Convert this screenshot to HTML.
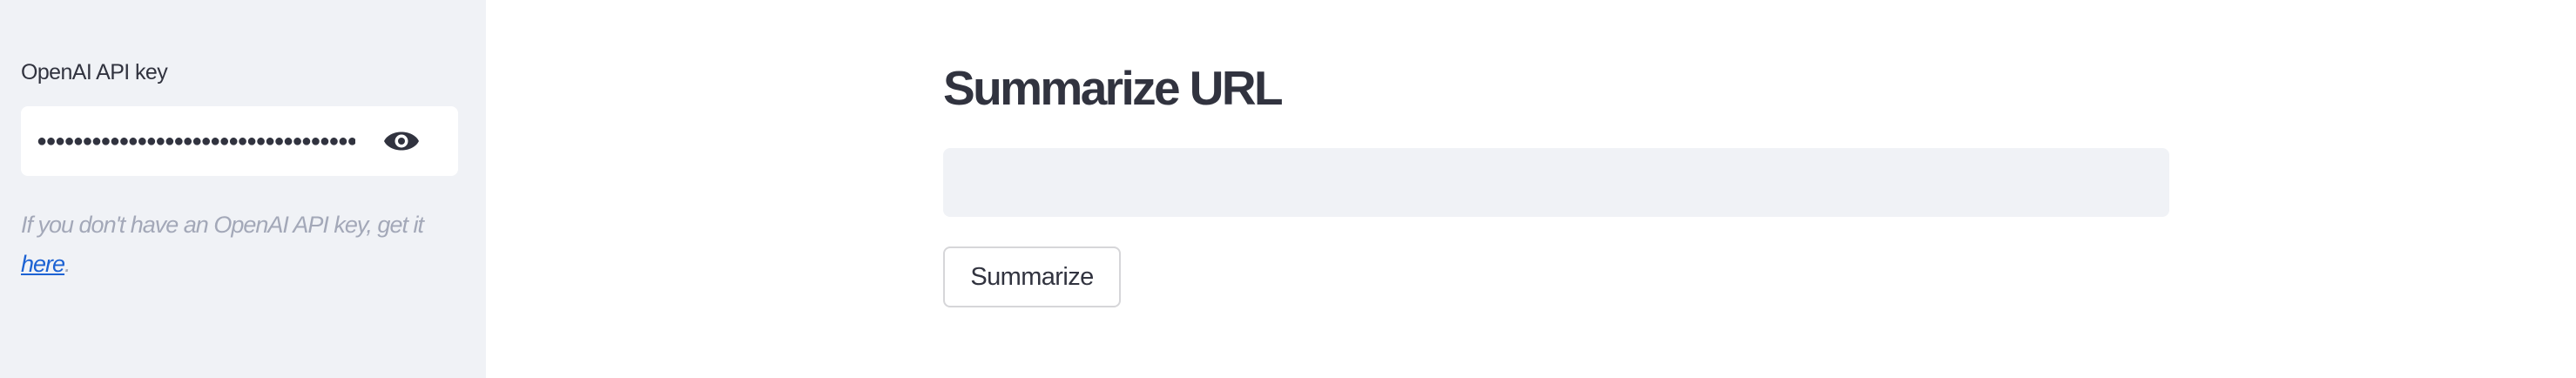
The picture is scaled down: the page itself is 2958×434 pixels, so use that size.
<!DOCTYPE html>
<html><head><meta charset="utf-8"><style>
html,body{margin:0;padding:0;width:2958px;height:434px;overflow:hidden;background:#fff;font-family:"Liberation Sans",sans-serif;color:#31333f}
.side{position:absolute;left:0;top:0;width:558px;height:434px;background:#f0f2f6}
.lbl{position:absolute;left:24px;top:69px;font-size:25px;letter-spacing:-0.6px}
.inp{position:absolute;left:24px;top:122px;width:502px;height:80px;background:#fff;border-radius:8px}
.dots{position:absolute;left:42px;top:150px;width:366px;height:24px;overflow:hidden;white-space:nowrap;font-size:20px;letter-spacing:-1.6px;line-height:24px;color:#31333f}
.help{position:absolute;left:24px;top:236px;font-size:27px;font-style:italic;color:#a3a8b8;letter-spacing:-1px;line-height:45px}
.help a{color:#1c62d3;text-decoration:underline}
h1{position:absolute;left:1083px;top:68px;margin:0;font-size:55px;font-weight:bold;letter-spacing:-2.6px;line-height:66px}
.box{position:absolute;left:1083px;top:170px;width:1408px;height:79px;background:#f0f2f6;border-radius:8px}
.btn{position:absolute;left:1083px;top:283px;width:200px;height:66px;border:2px solid #d6d6d9;border-radius:8px;background:#fff;font-size:29px;letter-spacing:-0.6px;line-height:66px;text-align:center}
</style></head><body>
<div class="side">
<div class="lbl">OpenAI API key</div>
<div class="inp"></div>
<div class="dots">●●●●●●●●●●●●●●●●●●●●●●●●●●●●●●●●●●●●●●●●●●●●●●●●</div>
<svg style="position:absolute;left:440px;top:148px" width="42" height="28" viewBox="0 0 42 28">
<path d="M1 14 C8 0 34 0 41 14 C34 28 8 28 1 14Z" fill="#31333f"/>
<circle cx="21" cy="14" r="7.5" fill="#fff"/><circle cx="21" cy="14" r="4" fill="#31333f"/></svg>
<div class="help">If you don't have an OpenAI API key, get it<br><a>here</a>.</div>
</div>
<h1>Summarize URL</h1>
<div class="box"></div>
<div class="btn">Summarize</div>
</body></html>
